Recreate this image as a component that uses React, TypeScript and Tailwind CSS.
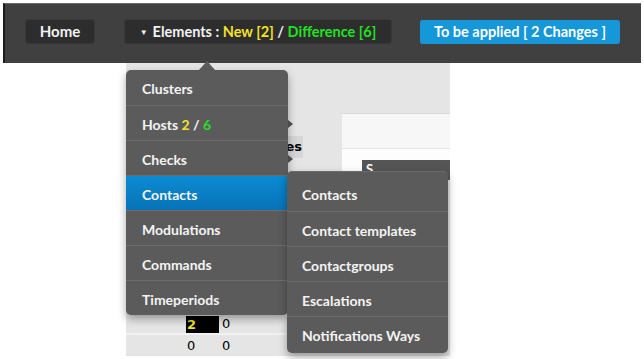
import React from "react";

const mainItems = [
  { key: "clusters", label: <>Clusters</> },
  {
    key: "hosts",
    label: (
      <>
        Hosts <span className="text-[#f2e22c]">2</span> / <span className="text-[#22e022]">6</span>
      </>
    ),
    arrow: true,
  },
  { key: "checks", label: <>Checks</>, arrow: true },
  { key: "contacts", label: <>Contacts</>, active: true },
  { key: "modulations", label: <>Modulations</> },
  { key: "commands", label: <>Commands</> },
  { key: "timeperiods", label: <>Timeperiods</> },
];

const subItems = ["Contacts", "Contact templates", "Contactgroups", "Escalations", "Notifications Ways"];

export default function App() {
  return (
    <div className="relative w-[644px] h-[359px] overflow-hidden bg-white font-['Lato','Noto_Sans',sans-serif]">
      {/* top bar */}
      <div className="mx-[3px] mt-[3px] h-[60px] bg-[#404040] border-t border-t-[#6a6a6a] border-l-2 border-l-[#1c1c1c] flex items-start pt-[15px] pl-[20px] whitespace-nowrap">
        <div className="w-[70px] h-[25px] rounded-[3px] bg-[#2d2d2d] border border-[#383838] flex items-center justify-center text-[15px] font-bold text-[#f2f2f2]">
          Home
        </div>
        <div className="ml-[29px] w-[268px] h-[25px] rounded-[3px] bg-[#2d2d2d] border border-[#383838] flex items-center justify-center text-[14.5px] font-bold text-[#f2f2f2]">
          <span className="text-[8px] mr-[5px]">▼</span>
          <span>Elements :&nbsp;</span>
          <span className="text-[#f2e22c]">New [2]</span>
          <span>&nbsp;/&nbsp;</span>
          <span className="text-[#22e022]">Difference [6]</span>
        </div>
        <div className="ml-[28px] mt-[1px] w-[200px] h-[24px] rounded-[3px] bg-[#1597d9] flex items-center justify-center text-[14.5px] font-bold text-white">
          To be applied [ 2 Changes ]
        </div>
      </div>

      {/* page behind */}
      <div className="flex h-[293px]">
        <div className="w-[126px] shrink-0" />
        <div className="w-[324px] shrink-0 bg-[#e5e5e5] flex">
          <div className="w-[160px] flex flex-col justify-end">
            <div className="flex h-[20px] items-center border-b-2 border-[#f2f2f2]">
              <div className="ml-[60px] w-[33px] h-[17px] bg-black text-[#f2e22c] font-bold text-[13px] pl-[1px] leading-[17px] font-['DejaVu_Sans',sans-serif]">2</div>
              <div className="ml-[3px] text-[13px] text-black font-['DejaVu_Sans',sans-serif]">0</div>
            </div>
            <div className="flex h-[21px] items-center">
              <div className="ml-[61px] w-[32px] text-[13px] text-black font-['DejaVu_Sans',sans-serif]">0</div>
              <div className="ml-[3px] text-[13px] text-black font-['DejaVu_Sans',sans-serif]">0</div>
            </div>
          </div>
          <div className="w-[56px] pt-[73px]">
            <div className="w-[17px] h-[22px] bg-[#d6d6d6] flex items-center justify-end pr-[1px] text-[13px] font-bold text-black font-['DejaVu_Sans',sans-serif] overflow-hidden">
              es
            </div>
          </div>
          <div className="flex-1 pt-[50px]">
            <div className="h-[35px] bg-[#f7f7f7] border-t border-[#d8d8d8]" />
            <div className="h-[12px] bg-[#fdfdfd] border-t border-[#e2e2e2]" />
            <div className="flex bg-[#fdfdfd] h-[20px]">
              <div className="w-[20px]" />
              <div className="flex-1 bg-[#555] text-white text-[13px] font-bold pl-[4px]">S</div>
            </div>
          </div>
        </div>
        <div className="flex-1" />
      </div>

      {/* main dropdown arrow */}
      <div className="absolute left-[199px] top-[61px] w-0 h-0 border-l-[8px] border-r-[8px] border-b-[9px] border-l-transparent border-r-transparent border-b-[#5d5d5d]" />

      {/* main dropdown */}
      <div className="absolute left-[126px] top-[70px] w-[162px] rounded-[5px] bg-[#5b5b5b] shadow-[0_4px_8px_rgba(0,0,0,0.35)]">
        {mainItems.map((it, i) => (
          <div
            key={it.key}
            className={
              "relative h-[35px] flex items-center pl-[16px] pt-[2px] text-[14px] font-bold text-[#f4f4f4] " +
              (i > 0 ? "border-t border-t-[#6e6e6e] " : "") +
              (i === 0 ? "rounded-t-[5px] " : "") +
              (i === mainItems.length - 1 ? "rounded-b-[5px] " : "") +
              (it.active ? "bg-gradient-to-b from-[#0b8bd3] to-[#0873b6] border-t-[#0b8bd3]" : "")
            }
          >
            <span>{it.label}</span>
            {it.arrow && (
              <span className="absolute right-[-5px] top-[14px] w-0 h-0 border-t-[4px] border-b-[4px] border-l-[5px] border-t-transparent border-b-transparent border-l-[#4a4a4a]" />
            )}
          </div>
        ))}
      </div>

      {/* submenu */}
      <div className="absolute left-[287px] top-[171px] w-[161px] rounded-[5px] bg-[#5b5b5b] shadow-[0_4px_8px_rgba(0,0,0,0.35)] pt-[4px] pb-[2px] border-t border-[#6a6a6a]">
        {subItems.map((s, i) => (
          <div
            key={s}
            className={
              "h-[35px] flex items-center pl-[15px] pt-[2px] text-[14px] font-bold text-[#f4f4f4] " +
              (i > 0 ? "border-t border-t-[#6e6e6e]" : "")
            }
          >
            {s}
          </div>
        ))}
      </div>
    </div>
  );
}
